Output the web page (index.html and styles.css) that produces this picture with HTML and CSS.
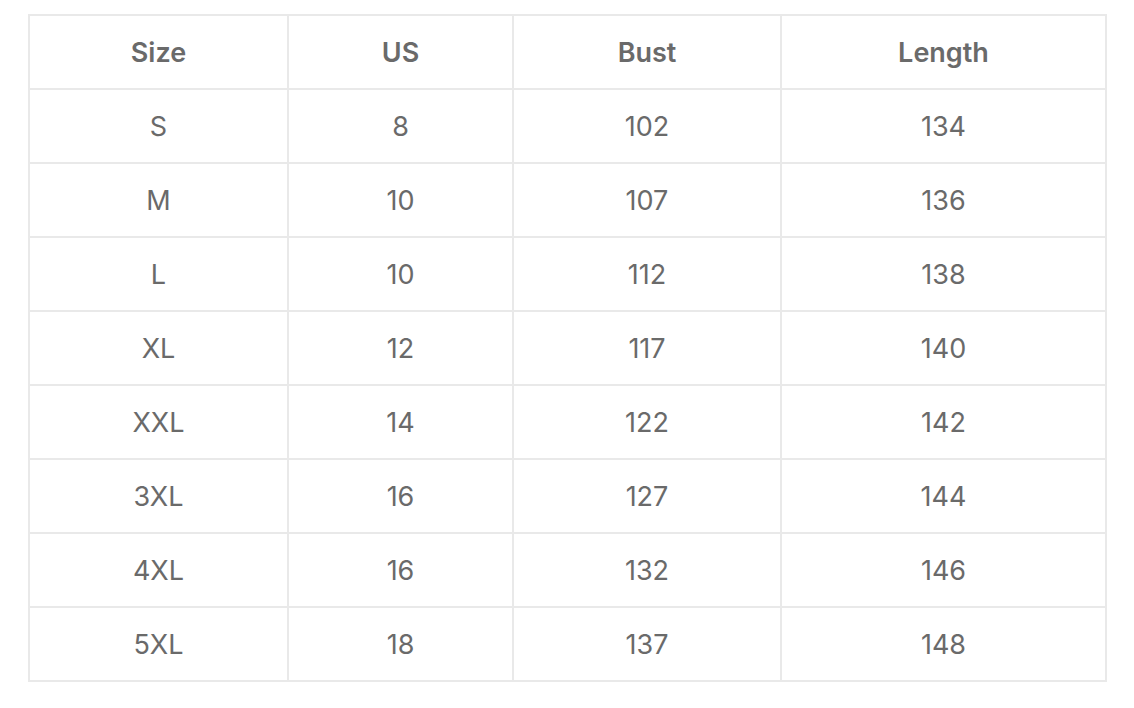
FILE: index.html
```html
<!DOCTYPE html>
<html>
<head>
<meta charset="utf-8">
<link rel="stylesheet" href="styles.css">
</head>
<body>
<div class="table">
  <div class="cell head">Size</div><div class="cell head">US</div><div class="cell head">Bust</div><div class="cell head">Length</div>
  <div class="cell">S</div><div class="cell">8</div><div class="cell">102</div><div class="cell">134</div>
  <div class="cell">M</div><div class="cell">10</div><div class="cell">107</div><div class="cell">136</div>
  <div class="cell">L</div><div class="cell">10</div><div class="cell">112</div><div class="cell">138</div>
  <div class="cell">XL</div><div class="cell">12</div><div class="cell">117</div><div class="cell">140</div>
  <div class="cell">XXL</div><div class="cell">14</div><div class="cell">122</div><div class="cell">142</div>
  <div class="cell">3XL</div><div class="cell">16</div><div class="cell">127</div><div class="cell">144</div>
  <div class="cell">4XL</div><div class="cell">16</div><div class="cell">132</div><div class="cell">146</div>
  <div class="cell">5XL</div><div class="cell">18</div><div class="cell">137</div><div class="cell">148</div>
</div>
</body>
</html>
```
FILE: styles.css
```css
html, body {
  margin: 0;
  padding: 0;
  background: #ffffff;
}
body {
  padding: 14px 0 0 28px;
  font-family: Inter, "Liberation Sans", sans-serif;
}
.table {
  display: grid;
  grid-template-columns: 257px 223px 266px 323px;
  grid-auto-rows: 72px;
  gap: 2px;
  padding: 2px;
  background: #e9e9e9;
  width: max-content;
}
.cell {
  background: #ffffff;
  display: flex;
  align-items: center;
  justify-content: center;
  font-size: 27px;
  color: #6a6a6a;
}
.head {
  font-weight: 600;
}
```
